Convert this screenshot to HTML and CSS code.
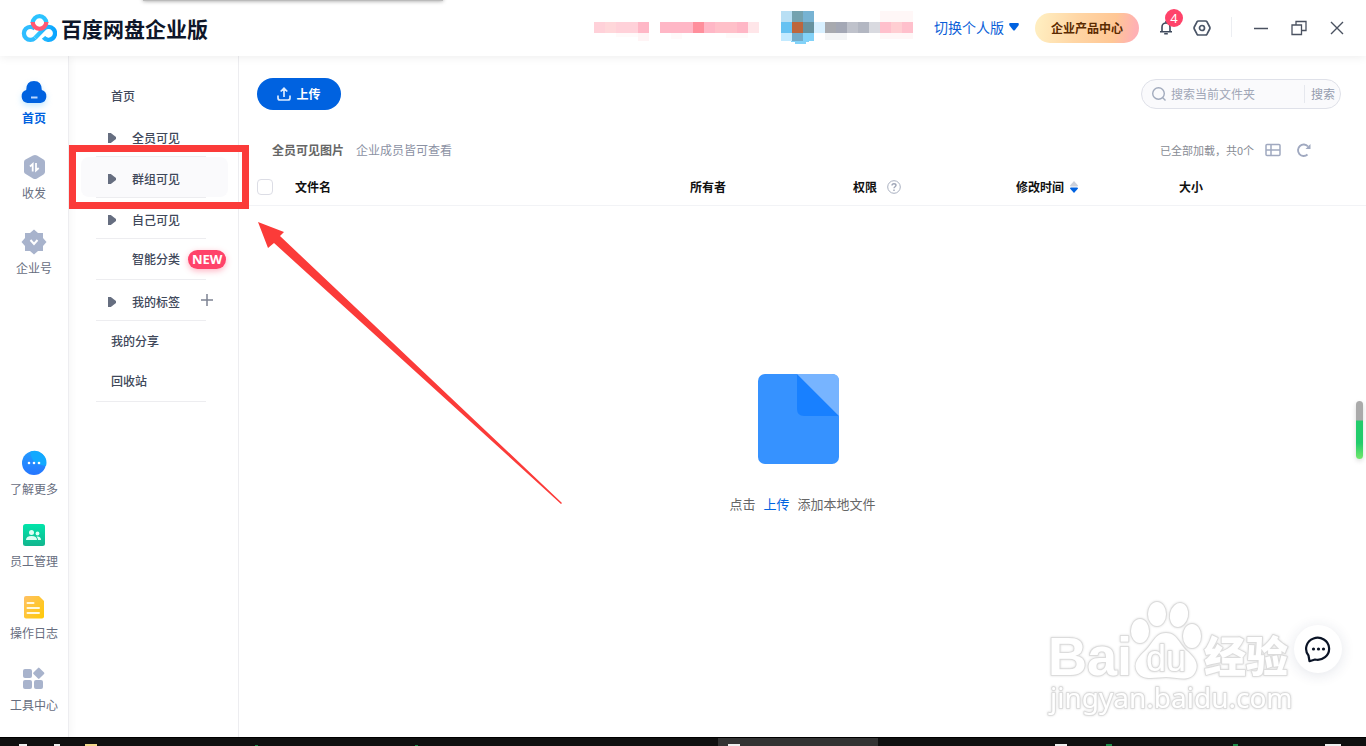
FILE: index.html
```html
<!DOCTYPE html>
<html lang="zh-CN">
<head>
<meta charset="utf-8">
<title>百度网盘企业版</title>
<link rel="stylesheet" href="styles.css">
</head>
<body>
<div class="peek"></div>
<header class="topbar">
  <div class="brand">
    <svg class="brand-logo" width="36" height="30" viewBox="0 0 36 30" fill="none" stroke-width="4.300">
      <defs><linearGradient id="lg" x1="0" y1="0" x2="1" y2="0"><stop offset="0" stop-color="#35c8ff"/><stop offset="1" stop-color="#0aa4ff"/></linearGradient></defs>
      <path d="M11.700 10a6.800 6.800 0 0 1 13.600 0" stroke="#2cc3ff"/>
      <path d="M14 24.900A6.500 6.500 0 1 1 14 15.700" stroke="#2fbdff"/>
      <path d="M14 24.900 23 15.700A6.500 6.500 0 1 1 22.500 24.400" stroke="url(#lg)"/>
      <path d="M11.700 9a6.800 6.800 0 1 0 13.600 0" stroke="#ff5874"/>
    </svg>
    <h1 class="brand-name">百度网盘企业版</h1>
  </div>
  <div class="top-actions">
    <svg class="mosaic" width="340" height="36" viewBox="0 0 340 36" shape-rendering="crispEdges">
      <path fill="#ffd1d9" d="M0 13h11v11H0zM22 13h22v11H22z"/><path fill="#ffd7da" d="M11 13h11v11H11z"/><path fill="#ffb7c6" d="M44 13h11v11H44zM66 13h33v11H66zM110 13h11v11h-11zM143 13h11v11h-11z"/><path fill="#ff8f9c" d="M99 13h11v11H99z"/><path fill="#ffc0c9" d="M121 13h22v11h-22z"/><path fill="#ffe6e9" d="M154 13h11v11h-11z"/>
      <path fill="#fffafa" d="M22 24h22v4H22zM77 24h11v6H77zM132 24h22v5h-22z"/><path fill="#fff4f5" d="M44 24h11v8H44z"/>
      <path fill="#b8dff4" d="M187 2h11v11h-11z"/><path fill="#74a2af" d="M198 2h11v11h-11z"/><path fill="#77b3d3" d="M209 2h11v11h-11z"/><path fill="#66c2f2" d="M187 13h11v11h-11z"/><path fill="#bd663c" d="M198 13h11v11h-11z"/><path fill="#66929f" d="M209 13h11v11h-11z"/><path fill="#c3eaff" d="M187 24h11v8h-11z"/><path fill="#72abc9" d="M198 24h11v8h-11z"/><path fill="#82d2f8" d="M209 24h11v8h-11zM197 32h18v1h-3v2h-11v-2h-4z"/><path fill="#d8f0ff" d="M220 13h11v11h-11z"/>
      <path fill="#a8aaaf" d="M231 13h11v11h-11z"/><path fill="#a4a8b5" d="M242 13h11v11h-11z"/><path fill="#bfc2cb" d="M253 13h11v11h-11z"/><path fill="#b3b7c2" d="M264 13h11v11h-11z"/><path fill="#d9dae0" d="M275 13h11v11h-11z"/><path fill="#ffc0cc" d="M286 13h11v11h-11zM308 13h11v11h-11z"/><path fill="#ffced2" d="M297 13h11v11h-11z"/><path fill="#fff7f7" d="M286 2h33v11h-33zM286 24h33v6h-33z"/><path fill="#f4f5f6" d="M231 24h22v7h-22z"/>
    </svg>
    <a class="switch" href="#">切换个人版
      <svg width="10" height="8" viewBox="0 0 10 8"><path d="M1.500 0h7C10 0 10.200 1.500 9.300 2.700L6 7Q5 8 4 7L.7 2.700C-.2 1.500 0 0 1.500 0z" fill="#0062e0"/></svg>
    </a>
    <button class="product">企业产品中心</button>
    <button class="icon-btn bell" aria-label="消息">
      <svg width="14" height="14" viewBox="0 0 14 14" fill="none" stroke="#3f4a5c" stroke-width="1.600"><path d="M3 10.500V6a4 4 0 0 1 8 0v4.500M1 10.700h12M7 0v2M5.200 12.700h3.600"/></svg>
      <span class="count">4</span>
    </button>
    <button class="icon-btn gear" aria-label="设置">
      <svg width="18" height="16" viewBox="0 0 18 16" fill="none" stroke="#4a5567" stroke-width="1.700"><path d="M5.500 1h7q1 0 1.500.8L16.700 7q.5 1 0 2L14 14.200q-.5.800-1.500.800h-7q-1 0-1.500-.8L1.300 9q-.5-1 0-2L4 1.800Q4.500 1 5.500 1z"/><circle cx="9" cy="8" r="2.500"/></svg>
    </button>
    <span class="divider"></span>
    <button class="icon-btn win" aria-label="最小化"><svg width="16" height="16" viewBox="0 0 16 16" stroke="#4a5160" stroke-width="1.500"><path d="M1 8.500h14"/></svg></button>
    <button class="icon-btn win" aria-label="还原"><svg width="16" height="16" viewBox="0 0 16 16" fill="none" stroke="#4a5160" stroke-width="1.300"><path d="M1 5h9.500v9.500H1zM5 5V1.500h10v9h-4.500"/></svg></button>
    <button class="icon-btn win" aria-label="关闭"><svg width="16" height="16" viewBox="0 0 16 16" stroke="#4a5160" stroke-width="1.400"><path d="m2 2 12 12M14 2 2 14"/></svg></button>
  </div>
</header>

<div class="shell">
  <nav class="rail" aria-label="主导航">
    <a class="rail-item active" href="#">
      <svg class="glow" width="26" height="26" viewBox="0 0 26 26"><path d="M6.500 24A6.700 6.700 0 0 1 5.200 11Q5.200 2 13 2t7.800 9a6.700 6.700 0 0 1-1.300 13z" fill="#0062e0"/><path d="M10 18.500h6.500" stroke="#b9d7ff" stroke-width="2"/></svg>
      <span>首页</span>
    </a>
    <a class="rail-item" href="#">
      <svg width="26" height="26" viewBox="0 0 26 26"><path d="M12 1.600q2-1 4 0l6.500 4Q24 6.500 24 8v10q0 1.500-1.500 2.400l-6.500 4q-2 1-4 0l-6.500-4Q3 19.500 3 18V8q0-1.500 1.500-2.400z" fill="#a8b3cc"/><path d="M9 12.500 11.700 10v7.500M15 9v7.500l2.700-2.500" fill="none" stroke="#fff" stroke-width="1.800"/></svg>
      <span>收发</span>
    </a>
    <a class="rail-item" href="#">
      <svg width="26" height="26" viewBox="0 0 26 26"><path d="m13 .5 4 3.500h5v5l3.500 4-3.500 4v5h-5l-4 3.500L9 22H4v-5L.5 13 4 9V4h5z" fill="#a8b3cc"/><path d="m9.500 11 3.500 4 3.500-4" fill="none" stroke="#fff" stroke-width="2"/></svg>
      <span>企业号</span>
    </a>
    <div class="rail-tools">
      <a class="rail-item" href="#">
        <svg width="26" height="26" viewBox="0 0 26 26"><defs><linearGradient id="bl" x1="0" y1="0" x2="0" y2="1"><stop offset="0" stop-color="#239bff"/><stop offset="1" stop-color="#2676ff"/></linearGradient></defs><circle cx="13" cy="13" r="12" fill="url(#bl)"/><path d="M9.500 2q0 12 15.500 14A12 12 0 0 0 9.500 1.500z" fill="#12a9ff"/><g fill="#fff"><circle cx="8" cy="13" r="1.300"/><circle cx="13" cy="13" r="1.300"/><circle cx="18" cy="13" r="1.300"/></g></svg>
        <span>了解更多</span>
      </a>
      <a class="rail-item" href="#">
        <svg width="26" height="26" viewBox="0 0 26 26"><defs><linearGradient id="gr" x1="0" y1="0" x2="0" y2="1"><stop offset="0" stop-color="#00e5aa"/><stop offset="1" stop-color="#12b58e"/></linearGradient></defs><rect x="2" y="2" width="22" height="22" rx="2.500" fill="url(#gr)"/><g fill="#dcfff4"><circle cx="10.500" cy="10.500" r="2.500"/><path d="M5 18q0-4 5.500-4T16 18z"/><circle cx="16.500" cy="11.500" r="1.900"/><path d="M15.500 14.500Q20 14 20 18h-3q0-2-1.500-3.500z"/></g></svg>
        <span>员工管理</span>
      </a>
      <a class="rail-item" href="#">
        <svg width="26" height="26" viewBox="0 0 26 26"><defs><linearGradient id="ye" x1="0" y1="0" x2="1" y2="1"><stop offset="0" stop-color="#ffc164"/><stop offset="1" stop-color="#ffca05"/></linearGradient></defs><path d="M5 2h13l5 5v15.500q0 2-2 2H5q-2 0-2-2V4q0-2 2-2z" fill="url(#ye)"/><path d="M6.500 9h6M6.500 14H18M6.500 19H18" stroke="#fff9df" stroke-width="2" stroke-linecap="round"/></svg>
        <span>操作日志</span>
      </a>
      <a class="rail-item" href="#">
        <svg width="26" height="26" viewBox="0 0 26 26" fill="#a8b3cc"><rect x="2" y="3" width="9" height="9" rx="2"/><rect x="2" y="14" width="9" height="9" rx="2"/><rect x="13" y="14" width="9" height="9" rx="2"/><rect x="13.500" y="3" width="8.500" height="8.500" rx="1" transform="rotate(45 17.750 7.250)"/></svg>
        <span>工具中心</span>
      </a>
    </div>
  </nav>

  <nav class="side" aria-label="文件分类">
    <a class="side-item plain" href="#">首页</a>
    <a class="side-item lined tree" href="#"><i class="caret"></i>全员可见</a>
    <a class="side-item lined tree current" href="#"><i class="caret"></i>群组可见<span class="marker"></span></a>
    <a class="side-item lined tree" href="#"><i class="caret"></i>自己可见</a>
    <a class="side-item lined" href="#"><i class="caret none"></i>智能分类<span class="new">NEW</span></a>
    <div class="side-item lined tree"><i class="caret"></i>我的标签<button class="add" aria-label="添加标签"><svg width="12" height="12" viewBox="0 0 12 12" stroke="#7d8392" stroke-width="1.500"><path d="M6 0v12M0 6h12"/></svg></button></div>
    <a class="side-item plain" href="#">我的分享</a>
    <a class="side-item plain lined" href="#">回收站</a>
  </nav>

  <main class="main">
    <div class="toolbar">
      <button class="upload"><svg width="14" height="14" viewBox="0 0 14 14" fill="none" stroke="#dcebff" stroke-width="1.700"><path d="M1 8.500V11q0 2 2 2h8q2 0 2-2V8.500M7 10V1.500M3.700 4.500 7 1.300l3.300 3.200"/></svg>上传</button>
      <form class="search">
        <svg width="16" height="16" viewBox="0 0 16 16" fill="none" stroke="#a2abbd" stroke-width="1.400"><circle cx="7.500" cy="7.500" r="5.800"/><path d="m11.500 11.500 3 3"/></svg>
        <input type="text" placeholder="搜索当前文件夹" aria-label="搜索当前文件夹">
        <button class="search-btn" type="button">搜索</button>
      </form>
    </div>
    <div class="crumbs">
      <strong>全员可见图片</strong><span class="hint">企业成员皆可查看</span>
      <span class="loaded">已全部加载，共0个</span>
      <button class="icon-btn view" aria-label="列表视图"><svg width="16" height="14" viewBox="0 0 16 14" fill="none" stroke="#a0a9c0" stroke-width="1.500"><rect x="1" y="1.500" width="14" height="11" rx="1"/><path d="M1 7h14M6 1.500v11"/></svg></button>
      <button class="icon-btn" aria-label="刷新"><svg width="16" height="16" viewBox="0 0 16 16" fill="none" stroke="#a0a9c0" stroke-width="1.900"><path d="M11.500 12.500A5.700 5.700 0 1 1 12 4.500"/><path d="M14.500 2v5h-5z" fill="#a0a9c0" stroke="none"/></svg></button>
    </div>
    <table class="files">
      <colgroup><col class="c-check"><col><col class="c-mid"><col class="c-mid"><col class="c-mid"><col class="c-size"></colgroup>
      <thead><tr>
        <th class="check"><input type="checkbox" aria-label="全选"></th>
        <th>文件名</th><th>所有者</th>
        <th><span class="th-in">权限<svg width="14" height="14" viewBox="0 0 14 14"><circle cx="7" cy="7" r="6.300" fill="none" stroke="#a9b0c0"/><path d="M5 5.500Q5 3.700 7 3.700t2 1.600C9 6.700 7 6.700 7 8.300M7 9.500V11" fill="none" stroke="#a0a7b8" stroke-width="1.400"/></svg></span></th>
        <th><span class="th-in sort">修改时间<svg width="8" height="12" viewBox="0 0 8 12"><path d="M4 0 8 4.500Q8 5.500 7 5.500H1Q0 5.500 0 4.500z" fill="#ccd0da"/><path d="M4 12 8 7.500Q8 6.500 7 6.500H1Q0 6.500 0 7.500z" fill="#0062e0"/></svg></span></th>
        <th>大小</th>
      </tr></thead>
    </table>
    <section class="empty">
      <svg width="90" height="90" viewBox="0 0 90 90"><rect width="81" height="90" rx="7" fill="#3692ff"/><path d="M39 0 81 42H46q-7 0-7-7z" fill="#1880ff"/><path d="M39 0h35q7 0 7 7v35z" fill="#77b4ff"/></svg>
      <p>点击<a href="#">上传</a>添加本地文件</p>
    </section>
    <svg class="watermark" width="250" height="124" viewBox="0 0 250 124" aria-hidden="true">
      <g class="wm-shape">
        <ellipse cx="95" cy="34" rx="9" ry="12"/><ellipse cx="112" cy="17" rx="9" ry="12"/><ellipse cx="134" cy="18" rx="9" ry="12" transform="rotate(12 134 18)"/><ellipse cx="147" cy="39" rx="9" ry="12"/>
        <path d="M121 36c-11 0-13 11-21 18-9 8-12 15-7 22 6 8 18 4 28 4s22 5 28-3c6-9 1-16-7-23s-10-18-21-18z"/>
      </g>
      <text class="wm-text wm-bai" x="3" y="78">Bai</text>
      <text class="wm-text wm-du" x="101" y="74">du</text>
      <text class="wm-text wm-cn" x="159" y="75">经验</text>
      <text class="wm-text wm-url" x="5" y="111">jingyan.baidu.com</text>
    </svg>
    <button class="chat" aria-label="在线客服"><svg width="28" height="28" viewBox="0 0 28 28"><path d="M4.500 20.500A11.500 11 0 1 1 11 24.500L5.500 26.200z" fill="none" stroke="#0b1426" stroke-width="2.200" stroke-linejoin="round"/><g fill="#0b1426"><circle cx="9.500" cy="14" r="1.600"/><circle cx="14.500" cy="14" r="1.600"/><circle cx="19.500" cy="14" r="1.600"/></g></svg></button>
    <div class="meter"></div>
  </main>
</div>
<svg class="arrow" width="310" height="290" viewBox="0 0 310 290" aria-hidden="true"><path d="M1 0 27 10 23 14 305 281 304 282 17 21 11 26z" fill="#fb3b39"/></svg>
<footer class="taskbar">
  <span class="task"></span>
  <svg class="task-icons" width="1366" height="2" viewBox="0 0 1366 2"><path d="M19 0h8v2h-8zM54 0h6v2h-6zM728 0h12v2h-12zM1055 0h12v2h-12zM1325 0h16v2h-16z" fill="#eee"/><path d="M85 0h12v2H85z" fill="#f2d88b"/><path d="M255 1h3v1h-3zM415 1h3v1h-3zM1106 0h6v2h-6zM1233 0h5v2h-5z" fill="#1d8c48"/></svg>
</footer>
</body>
</html>
```
FILE: styles.css
```css
* { box-sizing: border-box; }
body {
  margin: 0;
  min-height: 100vh;
  display: flex;
  flex-direction: column;
  position: relative;
  overflow: hidden;
  background: #fff;
  color: #444a58;
  font: 12px/18px "Noto Sans CJK SC", "Noto Sans", sans-serif;
}
a { color: inherit; text-decoration: none; }
button { margin: 0; padding: 0; border: 0; background: none; font: inherit; color: inherit; }
svg { display: block; flex: none; }

.peek { position: absolute; z-index: 5; top: -4px; left: 143px; width: 300px; height: 5px; background: #bbb; box-shadow: 0 0 4px #999; }

.topbar {
  position: relative;
  z-index: 2;
  display: flex;
  align-items: center;
  justify-content: space-between;
  height: 56px;
  padding: 0 21px;
  background: #fff;
  box-shadow: 0 0 10px rgba(0, 0, 0, .09);
}
.brand { display: flex; align-items: center; gap: 4px; }
.brand-name { margin: 0; font-size: 21px; line-height: 30px; font-weight: 700; color: #0e1629; }
.top-actions { display: flex; align-items: center; height: 54px; margin-bottom: 2px; }
.switch { display: flex; align-items: center; gap: 5px; font-size: 14px; color: #0c5fd8; }
.product {
  width: 104px;
  height: 30px;
  margin: 2px 20px 0 16px;
  border-radius: 15px;
  background: linear-gradient(100deg, #ffedbf 5%, #ffd6a5 40%, #ffc795 75%, #ffb0b4 95%);
  color: #5b2a00;
  font-weight: 700;
}
.icon-btn { display: flex; align-items: center; justify-content: center; }
.top-actions .icon-btn { padding-top: 2px; }
.bell { position: relative; }
.count {
  position: absolute;
  left: 6px;
  top: -10px;
  width: 18px;
  height: 18px;
  border-radius: 9px;
  background: #ff436a;
  color: #fff;
  font: 13px/18px "Noto Sans", sans-serif;
  text-align: center;
}
.gear { margin-left: 20px; }
.divider { width: 1px; height: 20px; margin: 0 21px 0 20px; background: #eceef2; }
.win + .win { margin-left: 22px; }

.shell { flex: 1; display: flex; }
.rail {
  width: 69px;
  display: flex;
  flex-direction: column;
  gap: 27px;
  padding: 23px 0 23px;
  border-right: 1px solid #ededf0;
  box-shadow: 2px 0 8px rgba(0, 0, 0, .04);
}
.rail-item { display: flex; flex-direction: column; align-items: center; gap: 4px; color: #676d7e; }
.rail-item.active { color: #0062e0; font-weight: 700; }
.glow { filter: drop-shadow(0 3px 3px rgba(60, 180, 255, .3)); }
.rail-tools { display: flex; flex-direction: column; gap: 24px; margin-top: auto; }

.side { width: 170px; padding-top: 20px; border-right: 1px solid #ededf0; color: #40485a; font-weight: 500; white-space: nowrap; }
.side-item { position: relative; display: flex; align-items: center; height: 41px; margin: 0 32px 0 27px; padding-left: 12px; }
.side-item.plain { height: 40px; padding-left: 15px; }
.side-item.lined { border-bottom: 1px solid #ededf0; }
.side-item.plain.lined { height: 41px; }
.side-item.tree { padding-top: 4px; }
.caret { flex: none; width: 8px; height: 10px; margin-right: 16px; background: #666e80; clip-path: polygon(0 0, 35% 0, 100% 40%, 100% 60%, 35% 100%, 0 100%); }
.caret.none { visibility: hidden; }
.current::before { content: ""; position: absolute; z-index: -1; inset: 0 -22px 0 -15px; border-radius: 8px; background: #fafafc; }
.marker { position: absolute; z-index: 3; inset: -12px -43px -12px -27px; border: 7px solid #fb3b39; }
.new {
  margin-left: 8px;
  padding: 0 4px;
  border-radius: 10px;
  background: #ff436a;
  box-shadow: 0 2px 6px rgba(255, 67, 106, .4);
  color: #fff;
  font: 700 13px/19px "Noto Sans", sans-serif;
}
.add { margin-left: 21px; padding-bottom: 4px; }

.main { position: relative; flex: 1; display: flex; flex-direction: column; min-width: 0; }
.toolbar { display: flex; align-items: center; justify-content: space-between; padding: 22px 25px 0 18px; }
.upload {
  display: flex;
  align-items: center;
  justify-content: center;
  gap: 5px;
  width: 84px;
  height: 32px;
  border-radius: 16px;
  background: #0062e0;
  color: #fff;
  font-weight: 700;
}
.search { display: flex; align-items: center; width: 200px; height: 30px; padding: 0 5px 0 9px; border: 1px solid #dfe1e9; border-radius: 15px; background: #fafafc; }
.search input { flex: 1; min-width: 0; margin: 0; padding: 0 0 0 4px; border: 0; outline: 0; background: none; font: inherit; }
.search input::placeholder { color: #a1a7b7; opacity: 1; }
.search-btn { padding-left: 6px; border-left: 1px solid #e6e8ee; color: #959cae; }
.crumbs { display: flex; align-items: center; margin-top: 30px; padding: 0 54px 0 33px; height: 20px; color: #666; }
.hint { margin-left: 12px; color: #8b91a3; }
.loaded { margin-left: auto; margin-right: 11px; font-size: 11px; color: #888b94; }
.view { margin-right: 15px; }
.files { width: 100%; margin-top: 10px; table-layout: fixed; border-collapse: collapse; }
.c-check { width: 56px; }
.c-mid { width: 163px; }
.c-size { width: 187px; }
.files th { height: 35px; padding: 0; border-bottom: 1px solid #f2f3f6; color: #111; font-weight: 700; text-align: left; }
.files .check { padding-left: 18px; }
.check input { appearance: none; display: block; width: 16px; height: 16px; margin: 0; border: 1px solid #dcdde5; border-radius: 4px; }
.th-in { display: flex; align-items: center; gap: 10px; }
.sort { gap: 6px; }
.empty { display: flex; flex-direction: column; align-items: center; padding-top: 168px; }
.empty p { display: flex; gap: 8px; margin: 31px 0 0; font-size: 13px; color: #666; }
.empty a { color: #0062e0; }

.watermark { position: absolute; right: 71px; bottom: 16px; }
.wm-shape, .wm-text { fill: #fff; stroke: #dcdcdc; stroke-width: 2px; paint-order: stroke; stroke-linejoin: round; filter: drop-shadow(0 0 1px #ddd); }
.wm-bai { font: 700 54px "Liberation Sans", sans-serif; }
.wm-du { font: 36px "Liberation Sans", sans-serif; }
.wm-cn { font: 900 42px "Noto Sans CJK SC", sans-serif; }
.wm-url { font: 28px "Noto Sans", sans-serif; }
.chat {
  position: absolute;
  right: 24px;
  bottom: 64px;
  display: flex;
  align-items: center;
  justify-content: center;
  width: 48px;
  height: 48px;
  border-radius: 24px;
  background: #fff;
  box-shadow: 0 2px 14px rgba(30, 50, 90, .12);
}
.meter { position: absolute; right: 3px; bottom: 278px; width: 7px; height: 58px; border-radius: 4px; background: linear-gradient(#aaa 0 19px, #22cc6c 20px 42px, #73e76b); box-shadow: 0 2px 5px rgba(0, 0, 0, .15); }
.arrow { position: absolute; z-index: 3; left: 257px; top: 222px; }

.taskbar { position: relative; z-index: 3; height: 9px; overflow: hidden; border-top: 1px solid #000; background: #101010; }
.task { position: absolute; left: 718px; top: 0; width: 160px; height: 8px; background: #333; }
.task-icons { position: absolute; left: 0; bottom: 0; }
```
